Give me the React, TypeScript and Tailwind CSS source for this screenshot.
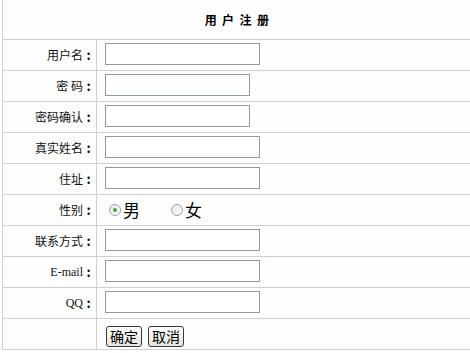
import React from 'react';

const fields = [
  { label: '用户名', width: 'w-[155px]' },
  { label: '密 码', width: 'w-[145px]', type: 'password' },
  { label: '密码确认', width: 'w-[145px]', type: 'password' },
  { label: '真实姓名', width: 'w-[155px]' },
  { label: '住址', width: 'w-[155px]' },
];

const fields2 = [
  { label: '联系方式', width: 'w-[155px]' },
  { label: 'E-mail', serif: true, width: 'w-[155px]' },
  { label: 'QQ', serif: true, width: 'w-[155px]' },
];

const Label: React.FC<{ text: string; serif?: boolean }> = ({ text, serif }) => (
  <span className="flex items-center whitespace-pre">
    <span className={serif ? "font-['Liberation_Serif',serif] text-[12px]" : ''}>{text}</span>
    <span className="inline-block w-[11px] text-center font-bold text-[13px]">:</span>
  </span>
);

const Row: React.FC<{ label: React.ReactNode; children: React.ReactNode }> = ({ label, children }) => (
  <div className="flex h-[31px] border-b border-[#d0d0d0]">
    <div className="w-[94px] shrink-0 border-r border-[#d0d0d0] flex items-center justify-end pr-[2px] text-[12px] text-[#111]">
      {label}
    </div>
    <div className="flex-1 flex items-center pl-[8px]">{children}</div>
  </div>
);

const TextBox: React.FC<{ width: string; type?: string }> = ({ width, type }) => (
  <input
    type={type || 'text'}
    className={`${width} h-[22px] mt-[-2px] border border-[#8e9ba6] bg-white outline-none`}
  />
);

const Radio: React.FC<{ checked?: boolean; label: string }> = ({ checked, label }) => (
  <label className="flex items-center">
    <span className="w-[12px] h-[12px] rounded-full border border-[#9aa3ab] bg-gradient-to-br from-[#e6e6e6] to-white flex items-center justify-center">
      {checked && <span className="w-[4px] h-[4px] rounded-full bg-[#3fa33f]" />}
    </span>
    <span className="ml-[2px] text-[17px] leading-none">{label}</span>
  </label>
);

const Btn: React.FC<{ children: React.ReactNode }> = ({ children }) => (
  <button className="h-[21px] px-[3px] border border-[#2f3b46] rounded-[3px] bg-gradient-to-b from-white to-[#e4e4dc] text-[14px] leading-none text-black">
    {children}
  </button>
);

const App: React.FC = () => {
  return (
    <div
      className="w-[470px] h-[353px] bg-white overflow-hidden pl-[2px]"
      style={{ fontFamily: '"Noto Sans CJK SC", "Liberation Sans", sans-serif' }}
    >
      <div className="border-l border-[#d0d0d0] bg-[#fefdfe]">
        {/* Title */}
        <div className="h-[40px] border-b border-[#d0d0d0] flex items-center justify-center pt-[1px] text-[12px] font-bold tracking-[0.45em] text-black pl-[6px]">
          用户注册
        </div>

        {fields.map((f) => (
          <Row key={f.label} label={<Label text={f.label} />}>
            <TextBox width={f.width} type={f.type} />
          </Row>
        ))}

        <Row label={<Label text="性别" />}>
          <div className="flex items-center gap-[31px] mt-[-1px] ml-[4px]">
            <Radio checked label="男" />
            <Radio label="女" />
          </div>
        </Row>

        {fields2.map((f) => (
          <Row key={f.label} label={<Label text={f.label} serif={f.serif} />}>
            <TextBox width={f.width} />
          </Row>
        ))}

        {/* Buttons */}
        <Row label="">
          <div className="flex gap-[6px] ml-[1px] mt-[4px]">
            <Btn>确定</Btn>
            <Btn>取消</Btn>
          </div>
        </Row>
      </div>
    </div>
  );
};

export default App;
